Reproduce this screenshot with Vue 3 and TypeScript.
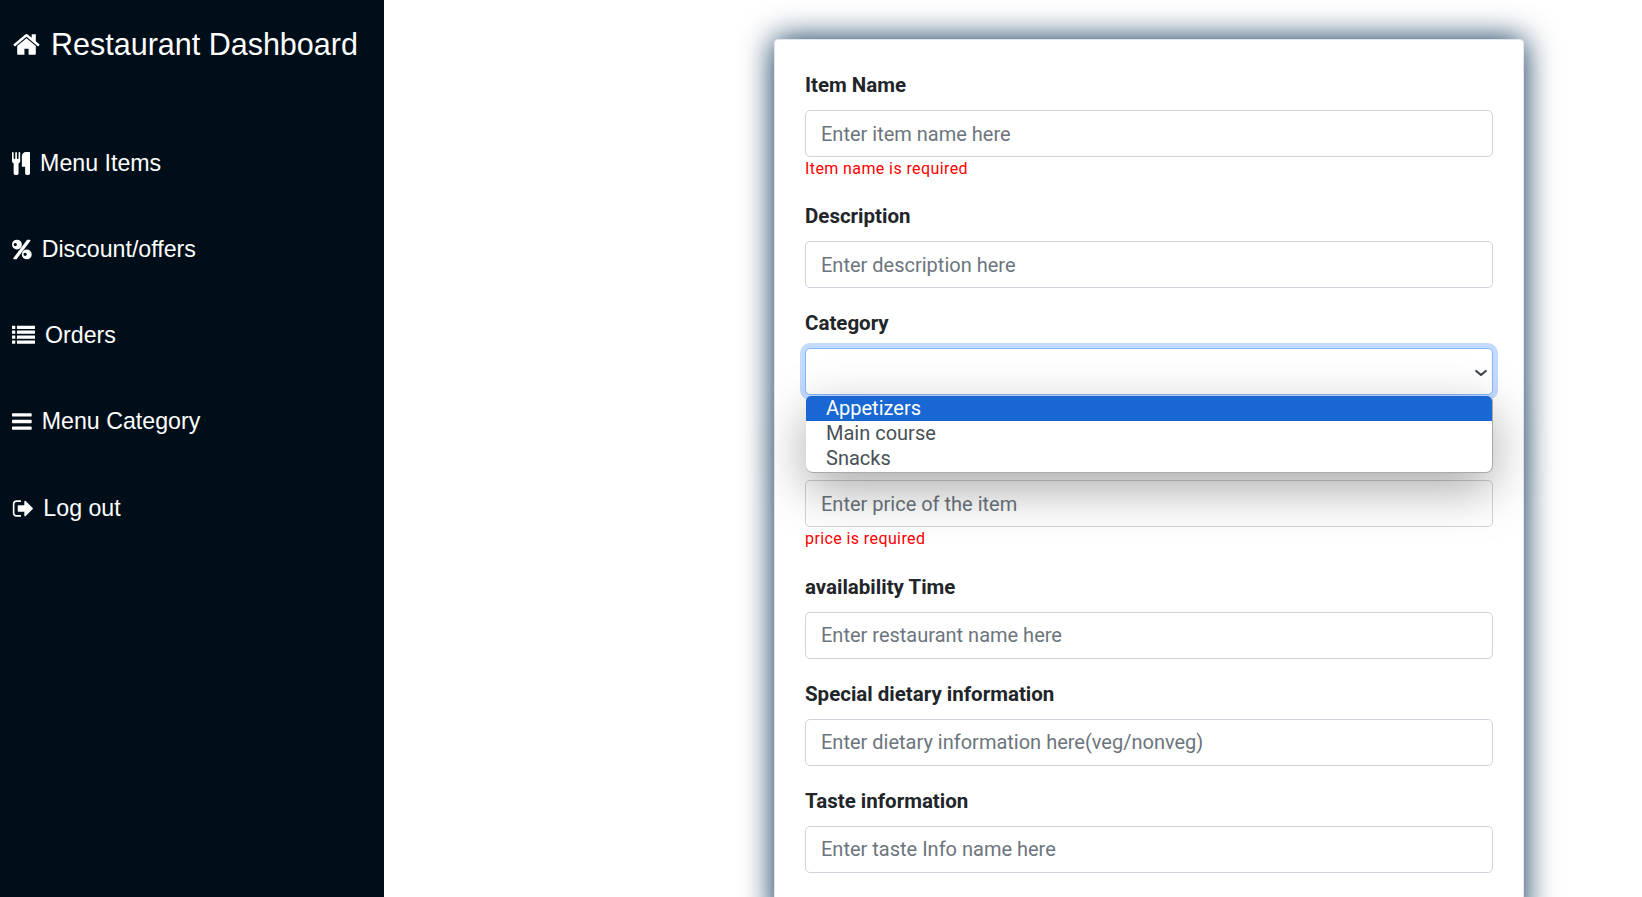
<script setup lang="ts">
interface NavItem {
  label: string
  icon: string
  box: string
}

const nav: NavItem[] = [
  {
    label: 'Menu Items',
    box: '0 0 1408 1792',
    icon: 'M640 64v640q0 61-35.5 111t-92.5 70v779q0 52-38 90t-90 38h-128q-52 0-90-38t-38-90v-779q-57-20-92.5-70t-35.5-111v-640q0-26 19-45t45-19 45 19 19 45v416q0 26 19 45t45 19 45-19 19-45v-416q0-26 19-45t45-19 45 19 19 45v416q0 26 19 45t45 19 45-19 19-45v-416q0-26 19-45t45-19 45 19 19 45zm768 0v1600q0 52-38 90t-90 38h-128q-52 0-90-38t-38-90v-512h-224q-13 0-22.5-9.5t-9.5-22.5v-800q0-132 94-226t226-94h256q26 0 45 19t19 45z'
  },
  {
    label: 'Discount/offers',
    box: '0 0 1536 1792',
    icon: 'M1152 1280q0-52-38-90t-90-38-90 38-38 90 38 90 90 38 90-38 38-90zm-768-768q0-52-38-90t-90-38-90 38-38 90 38 90 90 38 90-38 38-90zm1152 768q0 159-112.5 271.5t-271.5 112.5-271.5-112.5-112.5-271.5 112.5-271.5 271.5-112.5 271.5 112.5 112.5 271.5zm-96-1088q0 20-13 38l-1056 1408q-19 26-51 26h-160q-26 0-45-19t-19-45q0-20 13-38l1056-1408q19-26 51-26h160q26 0 45 19t19 45zm-672 320q0 159-112.5 271.5t-271.5 112.5-271.5-112.5-112.5-271.5 112.5-271.5 271.5-112.5 271.5 112.5 112.5 271.5z'
  },
  {
    label: 'Orders',
    box: '0 0 1792 1792',
    icon: 'M256 1312v192q0 13-9.5 22.5t-22.5 9.5h-192q-13 0-22.5-9.5t-9.5-22.5v-192q0-13 9.5-22.5t22.5-9.5h192q13 0 22.5 9.5t9.5 22.5zm0-384v192q0 13-9.5 22.5t-22.5 9.5h-192q-13 0-22.5-9.5t-9.5-22.5v-192q0-13 9.5-22.5t22.5-9.5h192q13 0 22.5 9.5t9.5 22.5zm0-384v192q0 13-9.5 22.5t-22.5 9.5h-192q-13 0-22.5-9.5t-9.5-22.5v-192q0-13 9.5-22.5t22.5-9.5h192q13 0 22.5 9.5t9.5 22.5zm1536 768v192q0 13-9.5 22.5t-22.5 9.5h-1344q-13 0-22.5-9.5t-9.5-22.5v-192q0-13 9.5-22.5t22.5-9.5h1344q13 0 22.5 9.5t9.5 22.5zm-1536-1152v192q0 13-9.5 22.5t-22.5 9.5h-192q-13 0-22.5-9.5t-9.5-22.5v-192q0-13 9.5-22.5t22.5-9.5h192q13 0 22.5 9.5t9.5 22.5zm1536 768v192q0 13-9.5 22.5t-22.5 9.5h-1344q-13 0-22.5-9.5t-9.5-22.5v-192q0-13 9.5-22.5t22.5-9.5h1344q13 0 22.5 9.5t9.5 22.5zm0-384v192q0 13-9.5 22.5t-22.5 9.5h-1344q-13 0-22.5-9.5t-9.5-22.5v-192q0-13 9.5-22.5t22.5-9.5h1344q13 0 22.5 9.5t9.5 22.5zm0-384v192q0 13-9.5 22.5t-22.5 9.5h-1344q-13 0-22.5-9.5t-9.5-22.5v-192q0-13 9.5-22.5t22.5-9.5h1344q13 0 22.5 9.5t9.5 22.5z'
  },
  {
    label: 'Menu Category',
    box: '0 0 1536 1792',
    icon: 'M1536 1344v128q0 26-19 45t-45 19h-1408q-26 0-45-19t-19-45v-128q0-26 19-45t45-19h1408q26 0 45 19t19 45zm0-512v128q0 26-19 45t-45 19h-1408q-26 0-45-19t-19-45v-128q0-26 19-45t45-19h1408q26 0 45 19t19 45zm0-512v128q0 26-19 45t-45 19h-1408q-26 0-45-19t-19-45v-128q0-26 19-45t45-19h1408q26 0 45 19t19 45z'
  },
  {
    label: 'Log out',
    box: '0 0 1664 1792',
    icon: 'M704 1440q0 4 1 20t.5 26.5-3 23.5-10 19.5-20.5 6.5h-320q-119 0-203.5-84.5t-84.5-203.5v-704q0-119 84.5-203.5t203.5-84.5h320q13 0 22.5 9.5t9.5 22.5q0 4 1 20t.5 26.5-3 23.5-10 19.5-20.5 6.5h-320q-66 0-113 47t-47 113v704q0 66 47 113t113 47h312l11.5 1 11.5 3 8 5.5 7 9 2 13.5zm928-544q0 26-19 45l-544 544q-19 19-45 19t-45-19-19-45v-288h-448q-26 0-45-19t-19-45v-384q0-26 19-45t45-19h448v-288q0-26 19-45t45-19 45 19l544 544q19 19 19 45z'
  }
]

const homeIcon =
  'M1472 992v480q0 26-19 45t-45 19h-384v-384h-256v384h-384q-26 0-45-19t-19-45v-480q0-1 .5-3t.5-3l575-474 575 474q1 2 1 6zm223-69l-62 74q-8 9-21 11h-3q-13 0-21-7l-692-577-692 577q-12 8-24 7-13-2-21-11l-62-74q-8-10-7-23.5t11-21.5l719-599q32-26 76-26t76 26l244 204v-195q0-14 9-23t23-9h192q14 0 23 9t9 23v408l219 182q10 8 11 21.5t-7 23.5z'

const categories = ['Appetizers', 'Main course', 'Snacks']
</script>

<template>
  <div class="page">
    <aside class="sidebar">
      <h1 class="brand">
        <svg class="brand-icon" viewBox="0 0 1792 1792"><path :d="homeIcon" /></svg>
        Restaurant Dashboard
      </h1>
      <nav class="nav">
        <a v-for="item in nav" :key="item.label" class="nav-item">
          <svg class="nav-icon" :viewBox="item.box"><path :d="item.icon" /></svg>
          {{ item.label }}
        </a>
      </nav>
    </aside>

    <main class="main">
      <form class="card">
        <div class="field">
          <label>Item Name</label>
          <input placeholder="Enter item name here" />
          <small>Item name is required</small>
        </div>
        <div class="field">
          <label>Description</label>
          <input placeholder="Enter description here" />
        </div>
        <div class="field">
          <label>Category</label>
          <div class="select-wrap">
            <div class="select">
              <svg class="chevron" viewBox="0 0 16 16">
                <path d="M3.2 6l4.8 4 4.8-4" fill="none" stroke="#3f454b" stroke-width="2.2" stroke-linecap="round" stroke-linejoin="round" />
              </svg>
            </div>
            <ul class="options">
              <li v-for="(c, i) in categories" :key="c" :class="{ selected: i === 0 }">{{ c }}</li>
            </ul>
          </div>
          <!-- these two sit under the open dropdown -->
          <small class="loose covered">Category is required</small>
        </div>
        <div class="field">
          <label class="covered">Price</label>
          <input placeholder="Enter price of the item" />
          <small class="loose">price is required</small>
        </div>
        <div class="field snug">
          <label>availability Time</label>
          <input placeholder="Enter restaurant name here" />
        </div>
        <div class="field snug">
          <label>Special dietary information</label>
          <input placeholder="Enter dietary information here(veg/nonveg)" />
        </div>
        <div class="field snug">
          <label>Taste information</label>
          <input placeholder="Enter taste Info name here" />
        </div>
      </form>
    </main>
  </div>
</template>

<style>
html,
body {
  margin: 0;
  height: 100%;
  overflow: hidden;
  background: #fff;
}
</style>

<style scoped>
.page {
  display: flex;
  height: 897px;
  overflow: hidden;
  font-family: Roboto, "Liberation Sans", sans-serif;
  color: #212529;
}

.sidebar {
  flex: 0 0 384px;
  box-sizing: border-box;
  padding: 0 12px;
  background: #000e1a;
  color: #fff;
  font-family: "Liberation Sans", Arial, sans-serif;
}

.brand {
  display: flex;
  align-items: center;
  gap: 10px;
  margin: 0;
  padding-top: 26px;
  height: 36px;
  font-size: 30.5px;
  font-weight: 400;
  line-height: 36px;
  white-space: nowrap;
}

.brand-icon {
  width: 29px;
  height: 29px;
  fill: #fff;
}

.nav {
  display: flex;
  flex-direction: column;
  gap: 56px;
  margin-top: 86px;
}

.nav-item {
  display: flex;
  align-items: center;
  gap: 10px;
  height: 30px;
  font-size: 23.2px;
  line-height: 30px;
  color: #fff;
}

.nav-item:last-child {
  margin-top: 1px;
}

.nav-icon {
  height: 23px;
  width: auto;
  fill: #fff;
  flex: none;
}

.main {
  flex: 1;
  padding: 39px 0 0 390px;
  min-width: 0;
}

.card {
  box-sizing: border-box;
  width: 750px;
  padding: 30px;
  border: 1px solid #e3e6ea;
  border-radius: 4px;
  background: #fff;
  box-shadow: 0 0 32px #002b50;
}

.field {
  display: flex;
  flex-direction: column;
  margin-bottom: 20px;
}

label {
  margin-bottom: 10px;
  font-size: 20.5px;
  font-weight: 700;
  line-height: 30px;
}

input,
.select {
  box-sizing: border-box;
  display: block;
  width: 100%;
  height: 47px;
  padding: 7.5px 15px;
  border: 1px solid #ced4da;
  border-radius: 5px;
  background: #fff;
  font-family: inherit;
  font-size: 20px;
  line-height: 30px;
  color: #212529;
  outline: none;
}

.snug input {
  padding-top: 6.5px;
  padding-bottom: 8.5px;
}

input::placeholder {
  color: #6c757d;
  opacity: 1;
}

small {
  font-size: 16px;
  line-height: 24px;
  letter-spacing: 0.4px;
  color: #ff0000;
}

small.loose {
  padding-bottom: 1px;
}

.covered {
  visibility: hidden;
}

.select-wrap {
  position: relative;
}

.select {
  border-color: #86b7fe;
  box-shadow: 0 0 0 5px rgba(13, 110, 253, 0.25);
}

.chevron {
  position: absolute;
  top: 17px;
  right: 4px;
  width: 16px;
  height: 16px;
}

.options {
  position: absolute;
  z-index: 5;
  top: 48px;
  left: 1px;
  right: 0;
  margin: 0;
  padding: 0 0 1px;
  list-style: none;
  border-right: 1px solid #aaa;
  border-bottom: 1px solid #aaa;
  border-radius: 5px 5px 7px 7px;
  background: #fff;
  box-shadow: 0 16px 50px rgba(0, 0, 0, 0.34);
  font-size: 20px;
  line-height: 25px;
  color: #495057;
}

.options li {
  padding-left: 20px;
  height: 25px;
}

.options li.selected {
  background: #1967d2;
  color: #fff;
  border-radius: 5px 5px 0 0;
}
</style>
